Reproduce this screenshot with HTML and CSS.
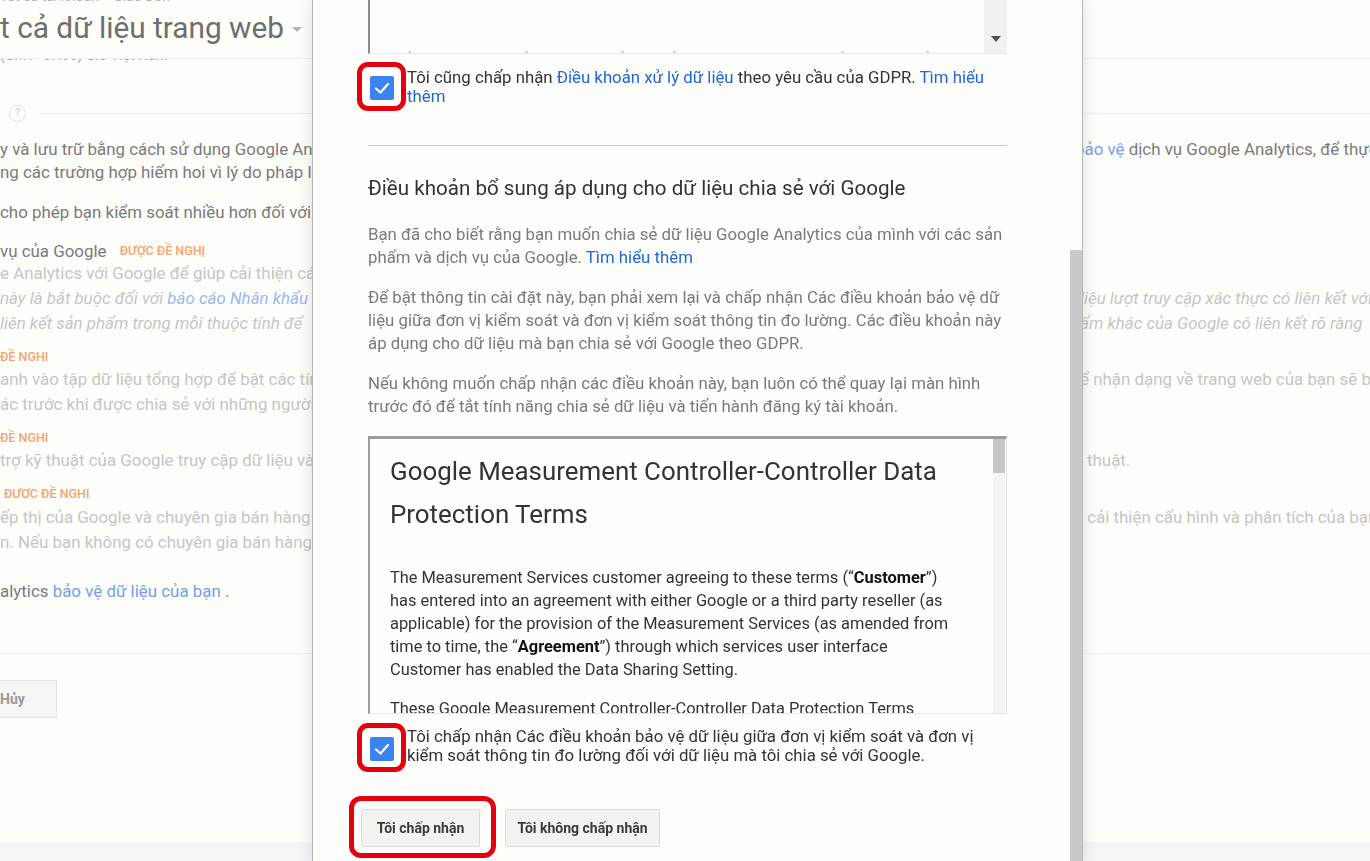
FILE: index.html
```html
<!DOCTYPE html>
<html lang="vi">
<head>
<meta charset="utf-8">
<title>Google Analytics</title>
<link rel="stylesheet" href="styles.css">
</head>
<body>
<div class="page">
  <header class="hdr">
    <div class="crumb">Tất cả tài khoản &gt; Giao Đơn</div>
    <div class="title">t cả dữ liệu trang web <span class="caret"></span></div>
  </header>
  <div class="strip"><span>(GMT+07:00) Giờ Việt Nam</span></div>
  <div class="help"><span class="q">?</span><span class="rule"></span></div>

  <div class="grp g1 dark">
    <div class="row lh23"><div class="l">y và lưu trữ bằng cách sử dụng Google Analytics</div><div class="r ind"><span class="lnk">bảo vệ</span> dịch vụ Google Analytics, để thực</div></div>
    <div class="row lh23"><div class="l">ng các trường hợp hiếm hoi vì lý do pháp lý</div><div class="r"></div></div>
  </div>
  <div class="grp g2 dark">
    <div class="row lh23"><div class="l">cho phép bạn kiểm soát nhiều hơn đối với việc</div><div class="r"></div></div>
  </div>
  <div class="grp g3 dark">
    <div class="row lh21"><div class="l">vụ của Google <span class="badge">Được đề nghị</span></div><div class="r"></div></div>
  </div>
  <div class="grp light">
    <div class="row lh25"><div class="l">e Analytics với Google để giúp cải thiện các</div><div class="r"></div></div>
    <div class="row lh25 it"><div class="l">này là bắt buộc đối với <span class="lnk2">báo cáo Nhân khẩu học</span></div><div class="r ind2">liệu lượt truy cập xác thực có liên kết với</div></div>
    <div class="row lh25 it"><div class="l">liên kết sản phẩm trong mỗi thuộc tính để</div><div class="r ind2">ẩm khác của Google có liên kết rõ ràng</div></div>
  </div>
  <div class="grp g4"><div class="row lh14"><div class="l"><span class="badge">Đề nghị</span></div><div class="r"></div></div></div>
  <div class="grp g5 light">
    <div class="row lh25"><div class="l">anh vào tập dữ liệu tổng hợp để bật các tính</div><div class="r ind2">ể nhận dạng về trang web của bạn sẽ bị</div></div>
    <div class="row lh25"><div class="l">ác trước khi được chia sẻ với những người</div><div class="r"></div></div>
  </div>
  <div class="grp g6"><div class="row lh14"><div class="l"><span class="badge">Đề nghị</span></div><div class="r"></div></div></div>
  <div class="grp g7 light">
    <div class="row lh25"><div class="l">trợ kỹ thuật của Google truy cập dữ liệu và</div><div class="r ind3">thuật.</div></div>
  </div>
  <div class="grp g6"><div class="row lh14"><div class="l"><span class="badge b4">Được đề nghị</span></div><div class="r"></div></div></div>
  <div class="grp g8 light">
    <div class="row lh25"><div class="l">ếp thị của Google và chuyên gia bán hàng của</div><div class="r">&nbsp;cải thiện cấu hình và phân tích của bạn</div></div>
    <div class="row lh25"><div class="l">n. Nếu bạn không có chuyên gia bán hàng</div><div class="r"></div></div>
  </div>
  <div class="grp g9 dark">
    <div class="row lh23"><div class="l">alytics <span class="lnk">bảo vệ dữ liệu của bạn</span> .</div><div class="r"></div></div>
  </div>
  <div class="hr"></div>
  <div class="cancel-row"><span class="cancel">Hủy</span></div>
  <div class="band"></div>
</div>

<div class="dialog">
  <div class="dlg-body">
    <div class="topbox">
      <div class="tb-text">Nếu bạn không chấp nhận các điều khoản này, bạn sẽ không thể tạo tài khoản Google Analytics.</div>
      <div class="tb-track"><span class="tri"></span></div>
    </div>

    <div class="ck-row">
      <div class="ck-ring"><span class="ck"><svg viewBox="0 0 24 24" width="24" height="24"><polyline points="6,12.5 10.5,16.5 18,8" fill="none" stroke="#fff" stroke-width="2.2" stroke-linecap="round" stroke-linejoin="round"/></svg></span></div>
      <div class="ck-label">Tôi cũng chấp nhận <a class="a">Điều khoản xử lý dữ liệu</a> theo yêu cầu của GDPR. <a class="a">Tìm hiểu</a><br><a class="a">thêm</a></div>
    </div>

    <div class="sep"></div>

    <h2 class="h">Điều khoản bổ sung áp dụng cho dữ liệu chia sẻ với Google</h2>
    <p class="p p1">Bạn đã cho biết rằng bạn muốn chia sẻ dữ liệu Google Analytics của mình với các sản<br>phẩm và dịch vụ của Google. <a class="a">Tìm hiểu thêm</a></p>
    <p class="p">Để bật thông tin cài đặt này, bạn phải xem lại và chấp nhận Các điều khoản bảo vệ dữ<br>liệu giữa đơn vị kiểm soát và đơn vị kiểm soát thông tin đo lường. Các điều khoản này<br>áp dụng cho dữ liệu mà bạn chia sẻ với Google theo GDPR.</p>
    <p class="p">Nếu không muốn chấp nhận các điều khoản này, bạn luôn có thể quay lại màn hình<br>trước đó để tắt tính năng chia sẻ dữ liệu và tiến hành đăng ký tài khoản.</p>

    <div class="terms">
      <div class="terms-body">
        <h3 class="t-title">Google Measurement Controller-Controller Data<br>Protection Terms</h3>
        <p class="tp">The Measurement Services customer agreeing to these terms (“<b>Customer</b>”)<br>has entered into an agreement with either Google or a third party reseller (as<br>applicable) for the provision of the Measurement Services (as amended from<br>time to time, the “<b>Agreement</b>”) through which services user interface<br>Customer has enabled the Data Sharing Setting.</p>
        <p class="tp tp2">These Google Measurement Controller-Controller Data Protection Terms<br>(“Controller Terms”) are supplemental to the Agreement.</p>
      </div>
      <div class="terms-track"><div class="terms-thumb"></div></div>
    </div>

    <div class="ck-row ck2">
      <div class="ck-ring"><span class="ck"><svg viewBox="0 0 24 24" width="24" height="24"><polyline points="6,12.5 10.5,16.5 18,8" fill="none" stroke="#fff" stroke-width="2.2" stroke-linecap="round" stroke-linejoin="round"/></svg></span></div>
      <div class="ck-label">Tôi chấp nhận Các điều khoản bảo vệ dữ liệu giữa đơn vị kiểm soát và đơn vị<br>kiểm soát thông tin đo lường đối với dữ liệu mà tôi chia sẻ với Google.</div>
    </div>

    <div class="actions">
      <div class="btn-ring"><button class="btn btn-a">Tôi chấp nhận</button></div>
      <button class="btn btn-b">Tôi không chấp nhận</button>
    </div>
  </div>
  <div class="dlg-scroll"><div class="thumb"></div></div>
</div>
</body>
</html>
```

FILE: styles.css
```css
html, body {
  margin: 0;
  padding: 0;
  height: 100%;
  overflow: hidden;
}
body {
  background: #fdfdfa;
  font-family: Roboto, "Noto Sans", "Liberation Sans", sans-serif;
  color: #7a7a7a;
}

/* ---------- background page ---------- */
.page {
  height: 861px;
  overflow: hidden;
}
.hdr {
  height: 59px;
  box-sizing: border-box;
  border-bottom: 1px solid #efefec;
  overflow: hidden;
}
.crumb {
  font-size: 14px;
  line-height: 14px;
  margin-top: -11px;
  color: #b0b0b0;
  white-space: nowrap;
}
.title {
  font-size: 29.8px;
  line-height: 36px;
  margin-top: 7px;
  color: #6e6e6e;
  white-space: nowrap;
  display: flex;
  align-items: center;
}
.caret {
  display: inline-block;
  width: 0;
  height: 0;
  margin-left: 8px;
  border-left: 5px solid transparent;
  border-right: 5px solid transparent;
  border-top: 5px solid #b3b3b3;
  margin-top: 2px;
}
.strip {
  height: 4px;
  overflow: hidden;
  font-size: 14px;
  line-height: 16px;
  color: #a5a5a5;
  white-space: nowrap;
}
.strip span {
  display: block;
  margin-top: -12px;
}
.help {
  margin-top: 40px;
  height: 20px;
  display: flex;
  align-items: center;
}
.q {
  width: 17px;
  height: 17px;
  box-sizing: border-box;
  border: 1.5px solid #e3e3e3;
  border-radius: 50%;
  margin-left: 9px;
  font-size: 11px;
  line-height: 14px;
  text-align: center;
  color: #cfcfcf;
  flex: none;
}
.rule {
  flex: 1;
  height: 1px;
  background: #eeeeea;
  margin-left: 14px;
}
.g1 { margin-top: 15px; }
.g2 { margin-top: 17px; }
.g3 { margin-top: 16px; }
.g4 { margin-top: 12px; }
.g5 { margin-top: 5px; }
.g6 { margin-top: 12px; }
.g7 { margin-top: 5px; }
.g8 { margin-top: 6px; }
.g9 { margin-top: 25px; }

.row {
  display: flex;
  white-space: nowrap;
  font-size: 16.9px;
}
.lh14 { line-height: 14px; height: 14px; }
.lh21 { line-height: 21px; height: 21px; }
.lh23 { line-height: 23px; height: 23px; }
.lh25 { line-height: 25px; height: 25px; }
.l {
  width: 312px;
  flex: none;
  overflow: hidden;
}
.r {
  margin-left: 771px;
  flex: 1;
  overflow: hidden;
}
.ind { text-indent: -8px; }
.ind2 { text-indent: -3px; }
.ind3 { padding-left: 4px; }
.dark { color: #7b7b7b; }
.light { color: #c6c6c6; }
.it { font-style: italic; }
.lnk { color: #77a0ea; }
.lnk2 { color: #9cb8ef; }
.badge {
  font-size: 12.5px;
  text-transform: uppercase;
  color: #f5a46e;
  margin-left: 9px;
  font-weight: 500;
  vertical-align: 2px;
}
.g4 .badge, .g6 .badge { margin-left: 0; vertical-align: 0; }
.badge.b4 { margin-left: 4px; }
.hr {
  margin-top: 50px;
  height: 1px;
  background: #eeeeea;
}
.cancel-row {
  margin-top: 26px;
  height: 38px;
}
.cancel {
  display: inline-flex;
  align-items: center;
  height: 38px;
  width: 57px;
  box-sizing: border-box;
  background: #f5f5f3;
  border: 1px solid #e6e6e3;
  border-left: none;
  font-size: 14px;
  font-weight: 700;
  color: #9a9a9a;
}
.band {
  margin-top: 124px;
  height: 40px;
  background: #f5f5f7;
}

/* ---------- dialog ---------- */
.dialog {
  position: fixed;
  top: 0;
  left: 312px;
  width: 771px;
  height: 861px;
  box-sizing: border-box;
  display: flex;
  background: #fdfdfb;
  border-left: 1px solid #b4b4b4;
  border-right: 1px solid #b8b8b8;
  box-shadow: 0 0 14px rgba(0, 0, 0, 0.13);
  overflow: hidden;
}
.dlg-body {
  flex: 1;
  padding: 0 63px 0 55px;
  overflow: hidden;
}
.dlg-scroll {
  width: 12px;
  flex: none;
  padding-top: 250px;
  box-sizing: border-box;
}
.thumb {
  height: 100%;
  background: #c9c9c9;
}

.topbox {
  height: 54px;
  display: flex;
  box-sizing: border-box;
  border-left: 2px solid #8d8d8d;
  border-bottom: 1px solid #eaeaea;
  background: #fdfdfb;
}
.tb-text {
  flex: 1;
  overflow: hidden;
  white-space: nowrap;
  padding: 48px 0 0 20px;
  font-size: 16px;
  line-height: 23px;
  color: #b0b0b0;
}
.tb-track {
  width: 23px;
  flex: none;
  background: #f1f1f0;
  display: flex;
  justify-content: center;
  padding-top: 36px;
  box-sizing: border-box;
}
.tri {
  width: 0;
  height: 0;
  border-left: 5px solid transparent;
  border-right: 5px solid transparent;
  border-top: 6px solid #505050;
}

.ck-row {
  display: flex;
  margin-top: 8px;
}
.ck-ring {
  width: 49px;
  height: 49px;
  box-sizing: border-box;
  border: 5px solid #e5000e;
  border-radius: 11px;
  margin-left: -11px;
  display: flex;
  align-items: center;
  justify-content: center;
  flex: none;
}
.ck {
  width: 24px;
  height: 24px;
  background: #3a84ef;
  border-radius: 2px;
  display: block;
  margin-top: 2px;
}
.ck svg { display: block; }
.ck-label {
  padding-top: 6px;
  margin-left: 1px;
  font-size: 16.8px;
  line-height: 19px;
  color: #333;
  white-space: nowrap;
}
.a {
  color: #1f66d8;
  text-decoration: none;
}
.sep {
  height: 1px;
  background: #c6c6c6;
  margin-top: 34px;
}
.h {
  margin: 28px 0 0;
  font-size: 20.6px;
  line-height: 28px;
  font-weight: 400;
  color: #333;
  white-space: nowrap;
}
.p {
  margin: 17px 0 0;
  font-size: 16.8px;
  line-height: 23px;
  color: #7a7a7a;
  white-space: nowrap;
}
.p1 { margin-top: 21px; }

.terms {
  margin-top: 18px;
  height: 278px;
  display: flex;
  box-sizing: border-box;
  border-top: 3px solid #9b9b9b;
  border-left: 2px solid #9b9b9b;
  border-right: 1px solid #e4e4e4;
  border-bottom: 1px solid #e6e6e6;
  overflow: hidden;
  background: #fefefd;
}
.terms-body {
  flex: 1;
  padding: 11px 0 0 20px;
  overflow: hidden;
  white-space: nowrap;
}
.t-title {
  margin: 0;
  font-size: 25.9px;
  line-height: 43px;
  font-weight: 400;
  color: #333;
}
.tp {
  margin: 30px 0 0;
  font-size: 16.4px;
  line-height: 23px;
  color: #333;
}
.tp b { font-weight: 700; color: #111; }
.tp2 { margin-top: 16px; }
.terms-track {
  width: 12px;
  flex: none;
  background: #f4f4f3;
  margin-right: 1px;
}
.terms-thumb {
  height: 34px;
  background: #c6c6c6;
}

.ck2 { margin-top: 9px; }
.ck2 .ck-label { padding-top: 4px; }

.actions {
  display: flex;
  align-items: flex-start;
  margin-top: 24px;
  margin-left: -19px;
}
.btn-ring {
  border: 5px solid #e5000e;
  border-radius: 12px;
  padding: 8px 11px 6px 7px;
  flex: none;
}
.btn {
  display: block;
  height: 38px;
  box-sizing: border-box;
  background: #f2f2f1;
  border: 1px solid #dadada;
  border-radius: 2px;
  font-family: Roboto, "Noto Sans", "Liberation Sans", sans-serif;
  font-size: 14px;
  font-weight: 700;
  color: #3a3a3a;
  padding: 0;
  text-align: center;
}
.btn-a { width: 119px; }
.btn-b {
  width: 155px;
  margin-left: 9px;
  margin-top: 13px;
}
```
